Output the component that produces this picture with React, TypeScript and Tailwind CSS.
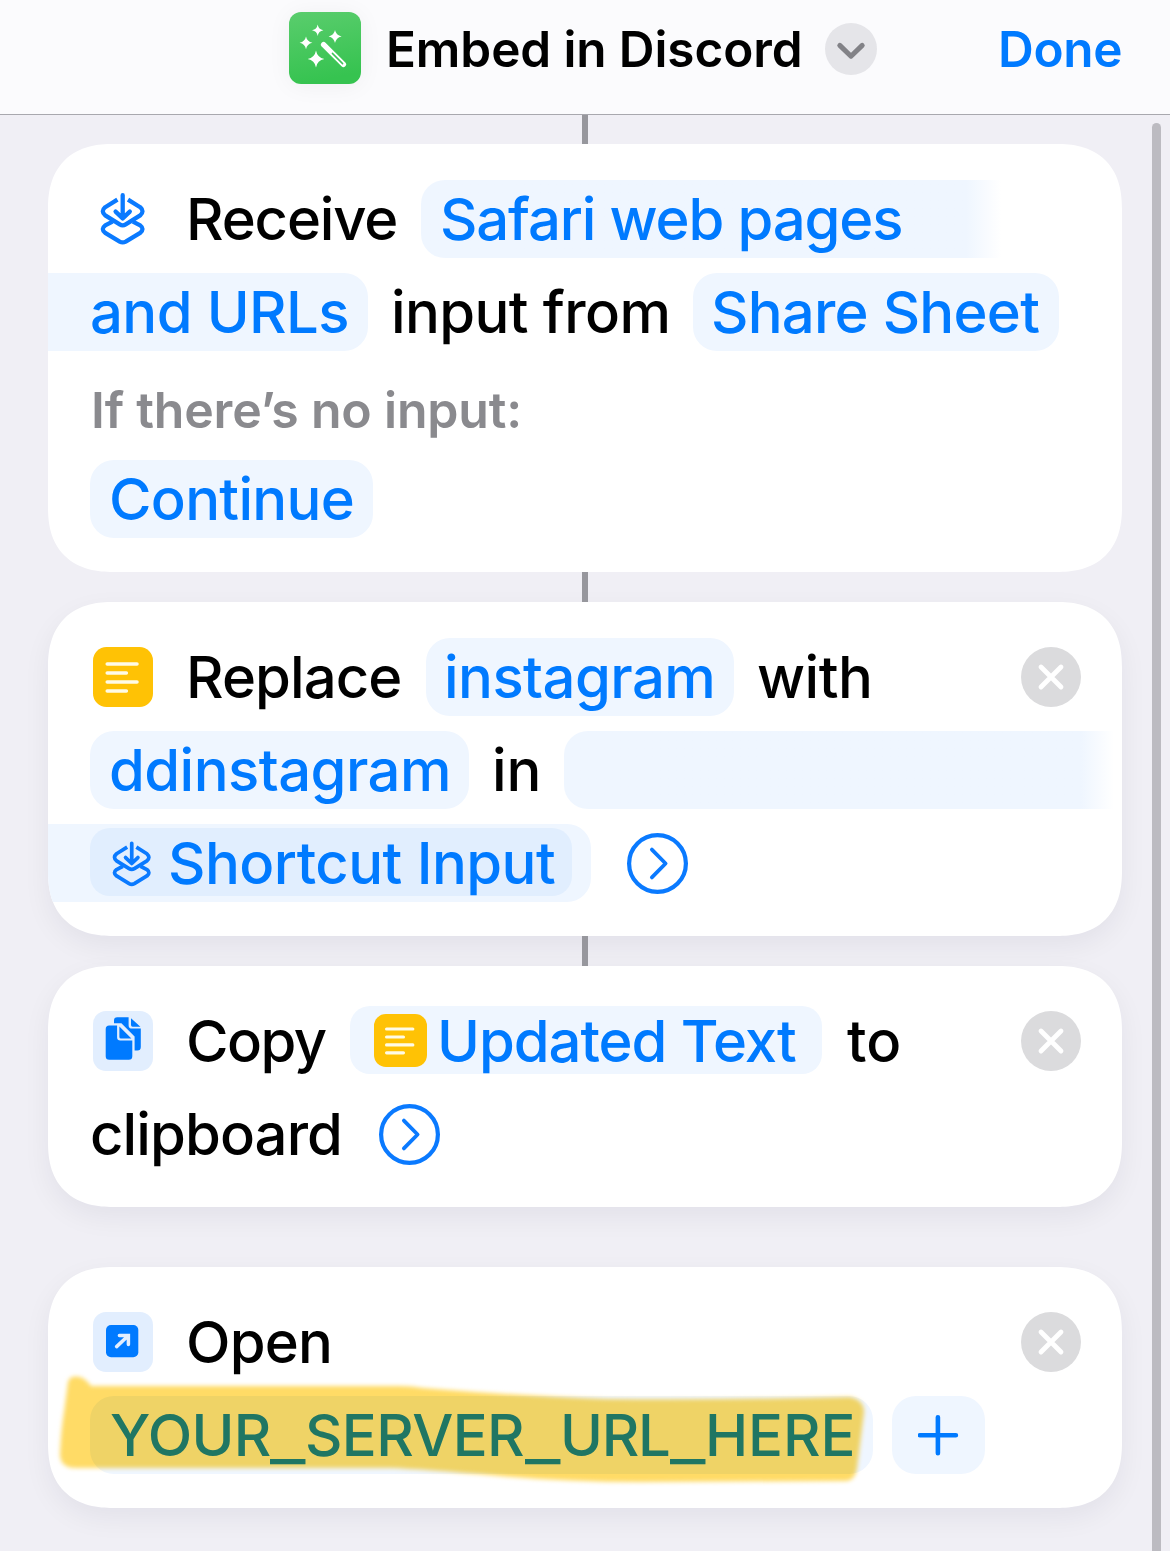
import type { ReactNode } from "react";

function ShortcutsGlyph({ className }: { className: string }) {
  return (
    <svg viewBox="0 0 60 60" className={className} fill="none" stroke="#0a7aff" strokeWidth="4.3" strokeLinecap="round" strokeLinejoin="round">
      <path strokeLinecap="butt" d="M24.4 10.6 L12.2 18.2 Q7.4 22.4 12.2 26.4 L26.7 35.4 Q29.7 37.2 32.7 35.4 L47.2 26.4 Q51.8 22.4 47.2 18.2 L35 10.6" />
      <path strokeLinecap="butt" d="M19.5 32.6 L12.2 36.4 Q7.4 39.9 12.2 43.8 L26.7 52.6 Q29.7 54.3 32.7 52.6 L47.2 43.8 Q51.8 39.9 47.2 36.4 L39.9 32.6" />
      <path d="M29.7 6.2 V29.2 M22.6 22.6 L29.7 29.4 L36.8 22.6" />
    </svg>
  );
}

function TextGlyph({ className }: { className: string }) {
  return (
    <svg viewBox="0 0 60 60" className={className}>
      <rect width="60" height="60" rx="13.5" fill="#ffc205" />
      <path d="M14.2 17H44 M14.2 26H33.4 M14.2 35H44 M14.2 44H33.4" stroke="#fffbe6" strokeWidth="3.5" strokeLinecap="round" />
    </svg>
  );
}

function CopyGlyph() {
  return (
    <svg viewBox="0 0 60 60" className="ml-[3px] size-[60px] shrink-0">
      <rect width="60" height="60" rx="13" fill="#e2eefe" />
      <g fill="#007aff">
        <path d="M21 12.2V9.6q0-3.3 3.3-3.3H35.6V14.2q0 3.4 3.4 3.4H47.8V36q0 3.5-3.5 3.5H41.6V25.4L28.4 12.2z" />
        <path d="M38 7.2L47.4 15.7H39.6Q38 15.7 38 14.1z" />
        <path d="M16.2 14.4H24.1V26.3q0 3.2 3.2 3.2H39.3V45.3q0 3.5-3.5 3.5H16.2q-3.5 0-3.5-3.5V17.9q0-3.5 3.5-3.5z" />
        <path d="M26.4 15.6L38.4 27.6H28Q26.4 27.6 26.4 26z" />
      </g>
    </svg>
  );
}

function OpenGlyph() {
  return (
    <svg viewBox="0 0 60 60" className="ml-[3px] size-[60px] shrink-0">
      <rect width="60" height="60" rx="13" fill="#e2eefe" />
      <rect x="13" y="13" width="32.3" height="32.2" rx="5" fill="#007aff" />
      <path d="M23.6 34.6L35.2 23.8M26.4 23.6H35.4V32.6" fill="none" stroke="#e2eefe" strokeWidth="3.5" strokeLinecap="round" strokeLinejoin="miter" />
    </svg>
  );
}

function CloseButton() {
  return (
    <button aria-label="Remove" className="ml-auto size-[60px] shrink-0">
      <svg viewBox="0 0 60 60" className="size-[60px]">
        <circle cx="30" cy="30" r="30" fill="#dbdbdd" />
        <path d="M20 20L40 40M40 20L20 40" stroke="#fff" strokeWidth="4.8" strokeLinecap="round" />
      </svg>
    </button>
  );
}

function Expand({ className }: { className: string }) {
  return (
    <svg viewBox="0 0 61 61" className={`size-[61px] shrink-0 ${className}`} fill="none" stroke="#0a7aff" strokeLinecap="round" strokeLinejoin="round">
      <circle cx="30.5" cy="30.5" r="28.4" strokeWidth="4.2" />
      <path d="M24.9 16.6L38.6 30.5L24.9 44.4" strokeWidth="3.8" />
    </svg>
  );
}

function WandIcon() {
  return (
    <svg viewBox="0 0 72 72" className="size-[72px] shrink-0 rounded-[12px] shadow-[0_2px_24px_rgba(0,0,0,0.05)]">
      <defs>
        <linearGradient id="green" x1="0" y1="0" x2="0.2" y2="1">
          <stop offset="0" stopColor="#5acd6d" />
          <stop offset="1" stopColor="#36c350" />
        </linearGradient>
      </defs>
      <rect width="72" height="72" fill="url(#green)" />
      <g fill="#fff">
        <path d="M28.7 12.6Q29.5 17.5 34.4 18.3Q29.5 19.1 28.7 24Q27.9 19.1 23 18.3Q27.9 17.5 28.7 12.6z" />
        <path d="M46 18Q47 23.3 52.6 24.4Q47 25.5 46 31Q45 25.5 39.6 24.4Q45 23.3 46 18z" />
        <path d="M17 24.6Q18 29.7 23.4 30.8Q18 31.9 17 37.2Q16 31.9 10.6 30.8Q16 29.7 17 24.6z" />
        <path d="M27 38.6Q28.3 45.7 35.4 47Q28.3 48.3 27 55.4Q25.7 48.3 18.6 47Q25.7 45.7 27 38.6z" />
      </g>
      <path d="M34.6 32.6L54.4 52.4" stroke="#fff" strokeWidth="5.4" strokeLinecap="round" />
      <path d="M43.4 41.4L53.6 51.6" stroke="#3fc458" strokeWidth="1.5" strokeLinecap="round" />
    </svg>
  );
}

function Card({ className, children }: { className: string; children: ReactNode }) {
  return (
    <section className={`relative flex shrink-0 flex-col gap-[15px] overflow-hidden rounded-[65px] bg-white pt-9 pr-[41px] pl-[42px] [corner-shape:superellipse(1.25)] ${className}`}>
      {children}
    </section>
  );
}

function Row({ children }: { children: ReactNode }) {
  return <div className="flex h-[78px] shrink-0 items-center">{children}</div>;
}

function Chip({ className, children }: { className: string; children?: ReactNode }) {
  return <div className={`flex shrink-0 items-center text-[#007aff] ${className}`}>{children}</div>;
}

const Underscore = () => <span className="w-[35px] origin-left translate-y-[3px] scale-x-[1.32]">_</span>;

const Connector = () => <div className="relative z-10 h-[30px] w-[6px] shrink-0 self-center bg-[#97979d]" />;

const shadow = "shadow-[0_10px_28px_rgba(20,10,50,0.06)]";

export default function App() {
  return (
    <div className="relative flex h-[1551px] w-[1170px] flex-col overflow-hidden bg-[#f0eff5] font-['Inter',sans-serif] text-[58px] leading-[78px] font-medium whitespace-nowrap text-black">
      <header className="flex h-[115px] shrink-0 border-b border-[#a8a8ae] bg-[#fbfbfd] pt-3 pl-[289px]">
        <WandIcon />
        <h1 className="ml-[25px] w-[439px] text-[49.5px] leading-[74px] font-semibold tracking-[-0.1px]">Embed in Discord</h1>
        <svg viewBox="0 0 52 52" className="mt-[11px] size-[52px]">
          <circle cx="26" cy="26" r="26" fill="#e5e5e9" />
          <path d="M14.8 22.4L26 33.2L37.2 22.4" fill="none" stroke="#828287" strokeWidth="5" strokeLinecap="round" strokeLinejoin="round" />
        </svg>
        <button className="ml-[121px] h-[74px] text-[49.5px] leading-[72px] font-semibold tracking-[-0.3px] text-[#007aff]">Done</button>
      </header>

      <div className="absolute top-[123px] left-[1152px] h-[1500px] w-[9px] rounded-full bg-[#bcbbc1]" />

      <main className="flex flex-col pr-12 pl-12">
        <div className="relative z-10 h-[29px] w-[6px] shrink-0 self-center bg-[#97979d]" />
        <Card className="h-[428px] w-[1074px]">
          <Row>
            <ShortcutsGlyph className="ml-[3px] size-[60px] shrink-0" />
            <span className="ml-[33px] w-[235px] shrink-0 tracking-[-1.15px]">Receive</span>
            <Chip className="h-[78px] w-[580px] rounded-l-[24px] bg-linear-to-r from-[#eff6ff] from-94% to-white pl-[19px] tracking-[-1.15px]">Safari web pages</Chip>
          </Row>
          <Row>
            <Chip className="-ml-[42px] h-[78px] w-[320px] rounded-r-[24px] bg-[#eff6ff] pl-[42px] tracking-[-0.6px]">and URLs</Chip>
            <span className="ml-[23px] w-[302px] shrink-0 tracking-[-0.6px]">input from</span>
            <Chip className="h-[78px] w-[366px] rounded-[24px] bg-[#eff6ff] pl-[18px] tracking-[-0.75px]">Share Sheet</Chip>
          </Row>
          <p className="h-[79px] pt-[6px] pl-px text-[50px] leading-[77px] font-semibold tracking-[-0.2px] text-[#8a8a8e]">If there’s no input:</p>
          <Row>
            <Chip className="h-[78px] w-[283px] rounded-[24px] bg-[#eff6ff] pl-[19px] tracking-[-0.7px]">Continue</Chip>
          </Row>
        </Card>

        <Connector />
        <Card className={`h-[334px] w-[1074px] ${shadow}`}>
          <Row>
            <TextGlyph className="ml-[3px] size-[60px] shrink-0" />
            <span className="ml-[33px] w-[240px] shrink-0 tracking-[-0.9px]">Replace</span>
            <Chip className="h-[78px] w-[308px] rounded-[24px] bg-[#eff6ff] pl-[18px] tracking-[-0.55px]">instagram</Chip>
            <span className="ml-[23px] tracking-[-0.5px]">with</span>
            <CloseButton />
          </Row>
          <Row>
            <Chip className="h-[78px] w-[379px] rounded-[24px] bg-[#eff6ff] pl-[19px] tracking-[-0.55px]">ddinstagram</Chip>
            <span className="ml-[23px] w-[72px] shrink-0 tracking-[-0.2px]">in</span>
            <Chip className="h-[78px] w-[550px] rounded-l-[24px] bg-linear-to-r from-[#eff6ff] from-94% to-white" />
          </Row>
          <Row>
            <Chip className="-ml-[42px] h-[78px] w-[543px] rounded-r-[24px] bg-[#eff6ff] pl-[42px]">
              <Chip className="mb-[2px] h-[68px] w-[482px] rounded-[20px] bg-[#e1eefe]">
                <ShortcutsGlyph className="mt-[3px] ml-4 size-[52px] shrink-0" />
                <span className="mt-px ml-[10px] tracking-[-0.54px]">Shortcut Input</span>
              </Chip>
            </Chip>
            <Expand className="ml-9" />
          </Row>
        </Card>

        <Connector />
        <Card className={`h-[241px] w-[1074px] ${shadow}`}>
          <Row>
            <CopyGlyph />
            <span className="ml-[33px] w-[164px] shrink-0 tracking-[-1.5px]">Copy</span>
            <Chip className="mb-[2px] h-[68px] w-[472px] rounded-[20px] bg-[#eff6ff]">
              <TextGlyph className="ml-6 size-[53px] shrink-0" />
              <span className="mt-[2px] ml-[10px] tracking-[-1.05px]">Updated Text</span>
            </Chip>
            <span className="ml-[25px]">to</span>
            <CloseButton />
          </Row>
          <Row>
            <span className="w-[289px] shrink-0 tracking-[-0.9px]">clipboard</span>
            <Expand className="" />
          </Row>
        </Card>

        <Card className={`mt-[60px] h-[241px] w-[1074px] ${shadow}`}>
          <Row>
            <OpenGlyph />
            <span className="ml-[33px] tracking-[-0.8px]">Open</span>
            <CloseButton />
          </Row>
          <Row>
            <Chip className="h-[78px] w-[783px] rounded-[24px] bg-[#eff6ff] pl-[20px] tracking-[-0.6px]">
              <span className="flex text-[#2089f7]">
                <span className="w-[160px]">YOUR</span>
                <Underscore />
                <span className="w-[220px]">SERVER</span>
                <Underscore />
                <span className="w-[110px] tracking-[-1.2px]">URL</span>
                <Underscore />
                <span className="tracking-[-0.1px]">HERE</span>
              </span>
            </Chip>
            <Chip className="ml-[19px] h-[78px] w-[93px] justify-center rounded-[24px] bg-[#eff6ff]">
              <svg viewBox="0 0 42 42" className="size-[42px]">
                <path d="M19.9 3.2V39.2M1.9 21.2H37.9" stroke="#007aff" strokeWidth="4.6" strokeLinecap="round" />
              </svg>
            </Chip>
          </Row>
          <svg viewBox="48 1367 830 125" className="pointer-events-none absolute top-[100px] left-0 h-[125px] w-[830px] mix-blend-multiply blur-[2px]">
            <path
              fill="#ffdb66"
              d="M68 1382Q70 1375 80 1377Q86 1379 91 1386L400 1386Q412 1386 423 1388Q520 1396 607 1399Q730 1400 850 1397Q864 1400 864 1412L857 1468Q855 1481 845 1481L640 1482Q570 1482 500 1476Q420 1469 390 1468L76 1468Q60 1468 60 1454Q61 1430 64 1412z"
            />
          </svg>
        </Card>
      </main>
    </div>
  );
}
